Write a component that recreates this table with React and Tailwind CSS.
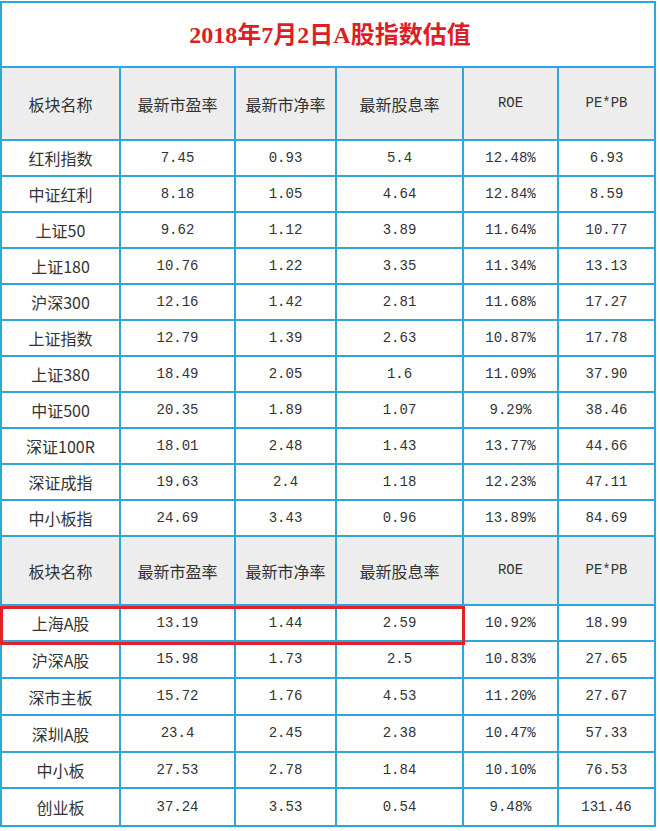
const top = [
  ["红利指数", "7.45", "0.93", "5.4", "12.48%", "6.93"],
  ["中证红利", "8.18", "1.05", "4.64", "12.84%", "8.59"],
  ["上证50", "9.62", "1.12", "3.89", "11.64%", "10.77"],
  ["上证180", "10.76", "1.22", "3.35", "11.34%", "13.13"],
  ["沪深300", "12.16", "1.42", "2.81", "11.68%", "17.27"],
  ["上证指数", "12.79", "1.39", "2.63", "10.87%", "17.78"],
  ["上证380", "18.49", "2.05", "1.6", "11.09%", "37.90"],
  ["中证500", "20.35", "1.89", "1.07", "9.29%", "38.46"],
  ["深证100R", "18.01", "2.48", "1.43", "13.77%", "44.66"],
  ["深证成指", "19.63", "2.4", "1.18", "12.23%", "47.11"],
  ["中小板指", "24.69", "3.43", "0.96", "13.89%", "84.69"],
];

const bottom = [
  ["上海A股", "13.19", "1.44", "2.59", "10.92%", "18.99"],
  ["沪深A股", "15.98", "1.73", "2.5", "10.83%", "27.65"],
  ["深市主板", "15.72", "1.76", "4.53", "11.20%", "27.67"],
  ["深圳A股", "23.4", "2.45", "2.38", "10.47%", "57.33"],
  ["中小板", "27.53", "2.78", "1.84", "10.10%", "76.53"],
  ["创业板", "37.24", "3.53", "0.54", "9.48%", "131.46"],
];

const bottomHeights = ["h-[36px]", "h-[37px]", "h-[37px]", "h-[37px]", "h-[36px]", "h-[38px]"];

const cjk = { fontFamily: "'Noto Sans CJK SC', sans-serif" };
const mono = { fontFamily: "'Liberation Mono', 'Noto Sans CJK SC', monospace" };

function HeaderRow({ height }) {
  const cols = ["板块名称", "最新市盈率", "最新市净率", "最新股息率"];
  return (
    <tr className={`${height} bg-[#ededed]`}>
      {cols.map((c) => (
        <td key={c} className="border-2 border-[#2ea6db] text-center text-[16px] text-[#333]" style={cjk}>
          {c}
        </td>
      ))}
      <td className="border-2 border-[#2ea6db] text-center text-[14px] text-[#333]" style={mono}>ROE</td>
      <td className="border-2 border-[#2ea6db] text-center text-[14px] text-[#333]" style={mono}>PE*PB</td>
    </tr>
  );
}

function DataRow({ row, height }) {
  return (
    <tr className={height}>
      <td className="border-2 border-[#2ea6db] text-center text-[16px] text-[#333]" style={cjk}>
        {row[0]}
      </td>
      {row.slice(1).map((v, i) => (
        <td key={i} className="border-2 border-[#2ea6db] text-center text-[14px] text-[#333]" style={mono}>
          {v}
        </td>
      ))}
    </tr>
  );
}

export default function App() {
  return (
    <div className="bg-white w-[660px] h-[831px] pt-[1px]">
      <div className="relative w-[654px]">
        <table className="w-[654px] table-fixed border-collapse border-2 border-[#2ea6db]">
          <colgroup>
            <col className="w-[119px]" />
            <col className="w-[115px]" />
            <col className="w-[101px]" />
            <col className="w-[127px]" />
            <col className="w-[95px]" />
            <col className="w-[97px]" />
          </colgroup>
          <tbody>
            <tr className="h-[65px]">
              <td colSpan={6} className="border-2 border-[#2ea6db] text-center">
                <span
                  className="text-[24px] font-bold text-[#dc1f26] pl-[4px]"
                  style={{ fontFamily: "'Liberation Serif', 'Noto Sans CJK SC', serif" }}
                >
                  2018年7月2日A股指数估值
                </span>
              </td>
            </tr>
            <HeaderRow height="h-[73px]" />
            {top.map((r) => (
              <DataRow key={r[0]} row={r} height="h-[36px]" />
            ))}
            <HeaderRow height="h-[69px]" />
            {bottom.map((r, i) => (
              <DataRow key={r[0]} row={r} height={bottomHeights[i]} />
            ))}
          </tbody>
        </table>
        {/* highlight box over 上海A股 row */}
        <div className="absolute left-0 top-[605px] w-[465px] h-[39px] border-[3px] border-[#e2222b] pointer-events-none" />
      </div>
    </div>
  );
}
